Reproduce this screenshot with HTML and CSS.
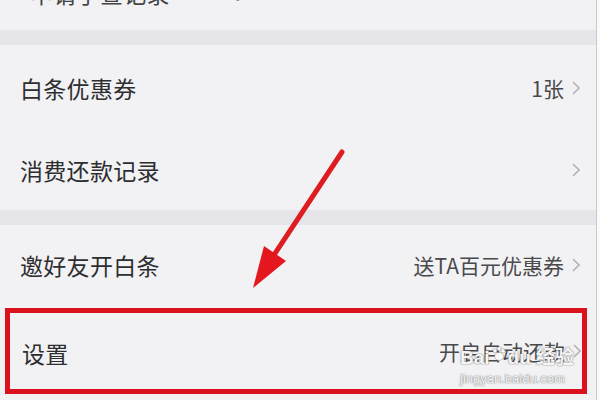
FILE: index.html
```html
<!DOCTYPE html>
<html lang="zh">
<head>
<meta charset="utf-8">
<link rel="stylesheet" href="styles.css">
</head>
<body>
<div class="screen">
  <div class="row row-top"><span class="label">申请手查记录</span><span class="dots">·</span></div>
  <div class="band"></div>
  <div class="row row-tall">
    <span class="label">白条优惠券</span>
    <span class="value">1张<svg class="chev" viewBox="0 0 8 14"><polyline points="1,1 7,7 1,13"/></svg></span>
  </div>
  <div class="row">
    <span class="label">消费还款记录</span>
    <span class="value"><svg class="chev" viewBox="0 0 8 14"><polyline points="1,1 7,7 1,13"/></svg></span>
  </div>
  <div class="band"></div>
  <div class="row">
    <span class="label">邀好友开白条</span>
    <span class="value">送TA百元优惠券<svg class="chev" viewBox="0 0 8 14"><polyline points="1,1 7,7 1,13"/></svg></span>
  </div>
  <div class="row row-boxed">
    <span class="label">设置</span>
    <span class="value">开启自动还款<svg class="chev" viewBox="0 0 8 14"><polyline points="1,1 7,7 1,13"/></svg></span>
  </div>
  <div class="watermark">
    <div class="wm-logo">Bai<svg class="paw" viewBox="0 0 20 20"><circle cx="5" cy="6" r="2.6"/><circle cx="10" cy="3.5" r="2.6"/><circle cx="15" cy="6" r="2.6"/><ellipse cx="10" cy="13" rx="5.5" ry="5"/></svg>du 经验</div>
    <div class="wm-url">jingyan.baidu.com</div>
  </div>
  <svg class="arrow" width="600" height="400" viewBox="0 0 600 400">
    <line x1="342" y1="152" x2="272" y2="258" />
    <polygon points="253,288 264,246 286,261" />
  </svg>
</div>
</body>
</html>
```
FILE: styles.css
```css
html, body {
  margin: 0;
  padding: 0;
}
body {
  background: #fafafb;
  font-family: "Noto Sans CJK SC", "Noto Sans", sans-serif;
}
.screen {
  position: relative;
  width: 596px;
  height: 400px;
  background: #f2f2f5;
  border-right: 1px solid #c9c9cd;
  overflow: hidden;
}
.row {
  height: 80px;
  display: flex;
  align-items: center;
  justify-content: space-between;
  padding: 0 16px 0 20px;
  box-sizing: border-box;
}
.row-tall {
  height: 85px;
}
.row-top {
  height: 30px;
  align-items: flex-end;
  justify-content: flex-start;
  gap: 60px;
  padding-left: 30px;
}
.row-top .label {
  line-height: 23px;
  margin-bottom: 25px;
  color: #444;
}
.row-top .dots {
  color: #888;
  font-size: 16px;
  line-height: 16px;
  margin-bottom: 24px;
}
.band {
  height: 15px;
  background: #e6e6ea;
}
.label {
  font-size: 23px;
  color: #2e2e30;
  letter-spacing: 0.3px;
}
.value {
  display: flex;
  align-items: center;
  font-size: 21px;
  color: #4a4a4c;
}
.chev {
  width: 8px;
  height: 14px;
  margin-left: 8px;
  fill: none;
  stroke: #b4b4b8;
  stroke-width: 1.6;
}
.row-boxed {
  height: 86px;
  margin: 3px 9px 0 5px;
  border: 5px solid #d9121c;
  padding: 0 1px 0 12px;
}
.row-boxed .label {
  margin-top: 4px;
}
.watermark {
  position: absolute;
  left: 460px;
  top: 348px;
  color: rgba(255, 255, 255, 0.95);
  text-shadow: 0 0 1px rgba(90, 90, 90, 0.9), 0 0 2px rgba(120, 120, 120, 0.5);
  font-family: "Liberation Sans", "Noto Sans CJK SC", sans-serif;
}
.wm-logo {
  display: flex;
  align-items: center;
  font-size: 19px;
  line-height: 20px;
  height: 20px;
  font-weight: bold;
}
.paw {
  width: 16px;
  height: 16px;
  margin: -8px 1px 0;
  fill: rgba(255, 255, 255, 0.95);
  stroke: rgba(100, 100, 100, 0.7);
  stroke-width: 0.7;
}
.wm-url {
  font-size: 13px;
  line-height: 16px;
  margin-top: 3px;
}
.arrow {
  position: absolute;
  left: 0;
  top: 0;
}
.arrow line {
  stroke: #dd1d22;
  stroke-width: 5;
  stroke-linecap: round;
}
.arrow polygon {
  fill: #e3171d;
}
```
